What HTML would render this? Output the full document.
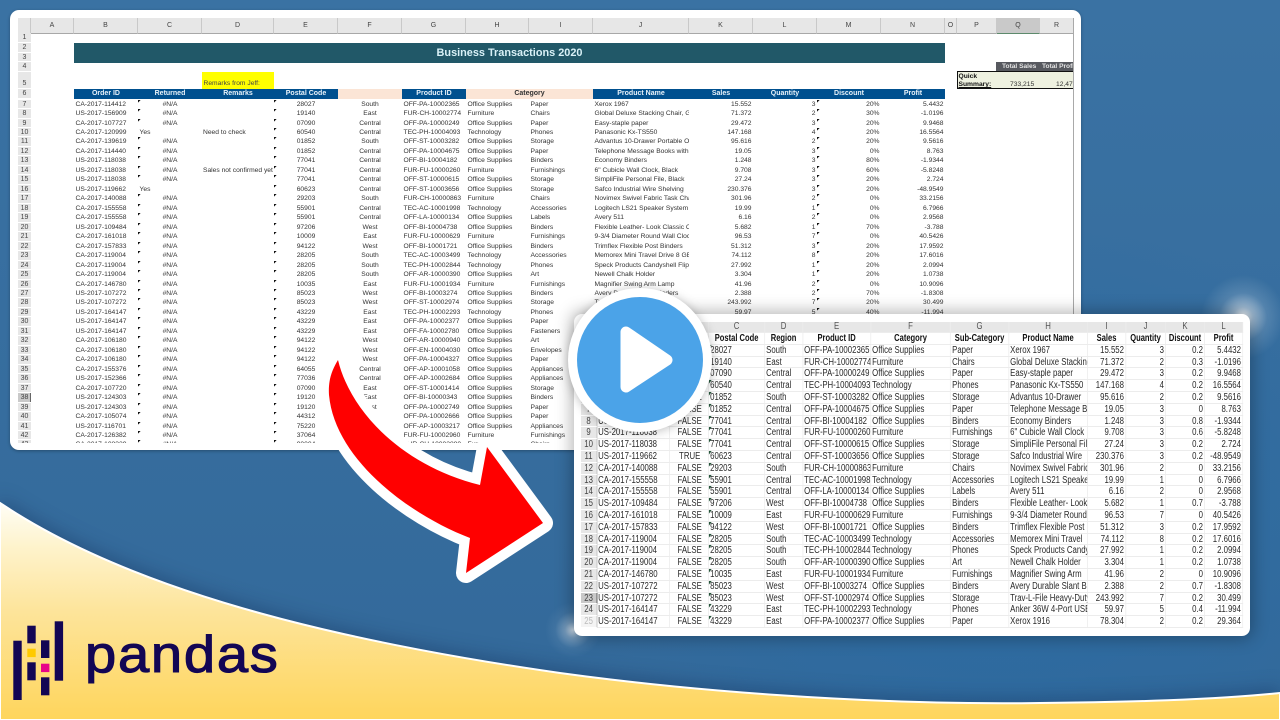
<!DOCTYPE html>
<html><head><meta charset="utf-8"><style>
*{box-sizing:border-box;margin:0;padding:0}
html,body{width:1280px;height:720px;overflow:hidden;background:#38709f;font-family:"Liberation Sans",sans-serif}
.abs{position:absolute}
#bg{position:absolute;inset:0;background:radial-gradient(ellipse 420px 300px at 1000px 520px,#2a6ba3 0%,rgba(42,107,163,0) 100%),linear-gradient(180deg,#3a72a3,#33699a)}
#lp{position:absolute;left:10px;top:10px;width:1071px;height:440px;background:#fff;border-radius:9px;overflow:hidden;box-shadow:0 1px 3px rgba(0,0,0,.3)}
#lw{position:absolute;left:-10px;top:-10px;width:1280px;height:720px;filter:blur(.3px);color:#333;font-size:6.7px}
#lw i{font-style:normal;white-space:nowrap;overflow:hidden;display:block;min-width:0}
.colh{position:absolute;top:18px;height:15.5px;background:#e7e7e7;border-bottom:1px solid #a8a8a8;border-right:1px solid #c9c9c9;text-align:center;line-height:15px;font-size:7px;color:#444}
.rn{position:absolute;left:18px;width:13px;background:#e7e7e7;text-align:center;font-size:7px;color:#444;border-bottom:1px solid #fff}
#lrows{position:absolute;left:18px;top:99.6px;width:927px;height:343.4px;overflow:hidden}
.r{display:grid;grid-template-columns:56px 64px 64px 72px 64px 64px 64px 63px 64px 96px 64px 64px 64px 64px;height:9.47px;line-height:9.47px}
.r i:nth-child(1){background:linear-gradient(90deg,#e7e7e7 13px,#fff 13px);padding-right:43px;text-align:center;font-size:7px;color:#444;box-shadow:inset 0 -1px 0 #fff}
.r i:nth-child(2){padding-left:1.5px}
.r i:nth-child(3){text-align:center;background:linear-gradient(135deg,#111 1.7px,transparent 2px) 0 0/4px 4px no-repeat}
.r i:nth-child(3).y{text-align:left;padding-left:1.5px;background:none}
.r i:nth-child(4){padding-left:1px}
.r i:nth-child(5){text-align:center;background:linear-gradient(135deg,#111 1.7px,transparent 2px) 0 0/4px 4px no-repeat}
.r i:nth-child(6){text-align:center}
.r i:nth-child(7),.r i:nth-child(8),.r i:nth-child(9),.r i:nth-child(10){padding-left:1.5px}
.r i:nth-child(n+11){text-align:right;padding-right:1.5px}
.r i:nth-child(13){background:linear-gradient(135deg,#111 1.7px,transparent 2px) 0 0/4px 4px no-repeat}
.h{position:absolute;top:88.7px;height:10.3px;line-height:10.3px;background:#00508f;color:#e8f3fb;font-weight:bold;font-size:7px;text-align:center}
#rp{position:absolute;left:574px;top:314px;width:676px;height:322px;background:#fff;border-radius:8px;box-shadow:0 0 16px 3px rgba(0,0,0,.28);overflow:hidden}
#rw{position:absolute;left:7px;top:8px;width:848.7px;height:306px;overflow:hidden;transform:scaleX(.78);transform-origin:0 0;font-size:10px;color:#2a2a2a;filter:blur(.25px)}
#rw i{font-style:normal;white-space:nowrap;overflow:hidden;display:block;min-width:0;border-right:1px solid #ececec;border-bottom:1px solid #ececec;padding-left:1.5px}
.q{display:grid;grid-template-columns:20.51px 93.59px 50px 71.79px 48.72px 87.18px 102.56px 74.36px 101.28px 48.72px 51.28px 50px 48.72px;height:11.8px;line-height:11.3px}
.q i:nth-child(1){background:#e7e7e7;text-align:center;padding-left:0!important;color:#444;border-bottom:1px solid #fff!important;border-right:1px solid #bbb!important}
.q i:nth-child(3){text-align:center}
.q i:nth-child(4){background:linear-gradient(135deg,#25553a 2.4px,transparent 2.7px) 0 0/5px 5px no-repeat;padding-left:1px}
.q i:nth-child(n+10){text-align:right;padding-right:1.5px;padding-left:0}
.q.t{height:11px;line-height:10.5px}
.q.t i{background:#e7e7e7!important;text-align:center!important;color:#555;border-right:1px solid #c4c4c4;border-bottom:1px solid #aaa;padding:0!important;font-size:10px}
.q.b{font-weight:bold;color:#111;font-size:9.7px}
.q.b i{text-align:center!important;padding:0!important;background:none!important;border-right:1px solid #555;border-bottom:1px solid #333}
</style></head><body>
<div id="bg"></div>
<div class="abs" style="left:1195px;top:270px;width:100px;height:100px;background:radial-gradient(circle at 48px 47px,rgba(255,255,255,.95) 0,rgba(255,255,255,.5) 10px,rgba(255,255,255,.14) 24px,rgba(255,255,255,0) 42px)"></div>
<div class="abs" style="left:545px;top:600px;width:60px;height:70px;background:radial-gradient(circle at 28px 30px,rgba(255,255,255,.7) 0,rgba(255,255,255,.3) 8px,rgba(255,255,255,.06) 18px,rgba(255,255,255,0) 28px)"></div>
<svg class="abs" style="left:0;top:0" width="1280" height="720">
<defs><linearGradient id="yg" x1="0" y1="503" x2="0" y2="720" gradientUnits="userSpaceOnUse"><stop offset="0" stop-color="#fffef6"/><stop offset=".2" stop-color="#fef3cc"/><stop offset=".5" stop-color="#fde49a"/><stop offset="1" stop-color="#fed55c"/></linearGradient></defs>
<path d="M0,503 C130,590 330,640 560,673 C720,695 900,705 1040,703 C1130,702 1210,700 1280,693 L1280,720 L0,720Z" fill="url(#yg)" stroke="#fff" stroke-width="2" style="filter:drop-shadow(0 -4px 9px rgba(10,30,70,.3))"/>
<rect x="13.3" y="640.7" width="8.4" height="59.3" fill="#130654"/>
<rect x="27.3" y="625.7" width="8.4" height="17.6" fill="#130654"/>
<rect x="27.3" y="648.7" width="8.4" height="8.4" fill="#ffca00"/>
<rect x="27.3" y="662.3" width="8.4" height="18" fill="#130654"/>
<rect x="41" y="640.3" width="8.4" height="17.7" fill="#130654"/>
<rect x="41" y="663.7" width="8.4" height="8.4" fill="#e70488"/>
<rect x="41" y="677.3" width="8.4" height="18" fill="#130654"/>
<rect x="54.7" y="621.3" width="8.4" height="59.4" fill="#130654"/>
<text transform="translate(85,672) scale(1.08,1)" font-family="Liberation Sans, sans-serif" font-size="52" letter-spacing="1.6" fill="#130654" stroke="#130654" stroke-width="1.1">pandas</text>
</svg>

<div id="lp"><div id="lw">
<div class="abs" style="left:18px;top:18px;width:1055px;height:15.5px;background:#e7e7e7"></div>
<div class="colh" style="left:18px;width:13px"></div>
<div class="colh" style="left:31px;width:43px">A</div>
<div class="colh" style="left:74px;width:64px">B</div>
<div class="colh" style="left:138px;width:64px">C</div>
<div class="colh" style="left:202px;width:72px">D</div>
<div class="colh" style="left:274px;width:64px">E</div>
<div class="colh" style="left:338px;width:64px">F</div>
<div class="colh" style="left:402px;width:64px">G</div>
<div class="colh" style="left:466px;width:63px">H</div>
<div class="colh" style="left:529px;width:64px">I</div>
<div class="colh" style="left:593px;width:96px">J</div>
<div class="colh" style="left:689px;width:64px">K</div>
<div class="colh" style="left:753px;width:64px">L</div>
<div class="colh" style="left:817px;width:64px">M</div>
<div class="colh" style="left:881px;width:64px">N</div>
<div class="colh" style="left:945px;width:12px">O</div>
<div class="colh" style="left:957px;width:40px">P</div>
<div class="colh" style="left:997px;width:43px;background:#c9c9c9;border-bottom:1.5px solid #5d8a6c">Q</div>
<div class="colh" style="left:1040px;width:33px;border-right:0">R</div>
<div class="abs" style="left:1073px;top:18px;width:1px;height:425px;background:#a9a9a9"></div>
<div class="rn" style="top:33px;height:10px;line-height:10px">1</div>
<div class="rn" style="top:43px;height:9.5px;line-height:9.5px">2</div>
<div class="rn" style="top:52.5px;height:9.5px;line-height:9.5px">3</div>
<div class="rn" style="top:62px;height:10px;line-height:10px">4</div>
<div class="rn" style="top:72px;height:16.7px;line-height:24px">5</div>
<div class="rn" style="top:88.7px;height:10.3px;line-height:10.3px">6</div>
<div class="abs" style="left:74px;top:43px;width:871px;height:19.5px;background:#215868;color:#d9f1f7;font-weight:bold;font-size:10.9px;line-height:21.5px;text-align:center">Business Transactions 2020</div>
<div class="abs" style="left:202px;top:72px;width:72px;height:16.7px;background:#ffff00;font-size:6.7px;line-height:23px;padding-left:1.5px;white-space:nowrap;overflow:hidden;color:#444">Remarks from Jeff:</div>
<div class="h" style="left:74px;width:64px">Order ID</div>
<div class="h" style="left:138px;width:64px">Returned</div>
<div class="h" style="left:202px;width:72px">Remarks</div>
<div class="h" style="left:274px;width:64px">Postal Code</div>
<div class="h" style="left:338px;width:64px;background:#fbe5d6"></div>
<div class="h" style="left:402px;width:64px">Product ID</div>
<div class="h" style="left:466px;width:127px;background:#fbe5d6;color:#333">Category</div>
<div class="h" style="left:593px;width:96px">Product Name</div>
<div class="h" style="left:689px;width:64px">Sales</div>
<div class="h" style="left:753px;width:64px">Quantity</div>
<div class="h" style="left:817px;width:64px">Discount</div>
<div class="h" style="left:881px;width:64px">Profit</div>
<div class="abs" style="left:996px;top:61.5px;width:77px;height:9.5px;background:#57595f;color:#e4e4e4;font-weight:bold;font-size:6.6px;line-height:9.5px;white-space:nowrap;overflow:hidden"><span class="abs" style="left:6px">Total Sales</span><span class="abs" style="left:46px">Total Profit</span></div>
<div class="abs" style="left:957px;top:71px;width:116px;height:18px;background:#eef1e0;border:1px solid #111;border-right:0;font-size:6.7px;color:#222"></div>
<div class="abs" style="left:958.5px;top:72px;font-size:6.7px;font-weight:bold;line-height:9px;color:#111">Quick</div>
<div class="abs" style="left:958.5px;top:81px;font-size:6.7px;font-weight:bold;line-height:8px;color:#111;text-decoration:underline">Summary:</div>
<div class="abs" style="left:1010px;top:80px;font-size:6.7px;line-height:9px;color:#333">733,215</div>
<div class="abs" style="left:1056px;top:80px;width:17px;overflow:hidden;font-size:6.7px;line-height:9px;color:#333">12,47</div>
<div id="lrows">
<div class="r"><i>7</i><i>CA-2017-114412</i><i>#N/A</i><i></i><i>28027</i><i>South</i><i>OFF-PA-10002365</i><i>Office Supplies</i><i>Paper</i><i>Xerox 1967</i><i>15.552</i><i>3</i><i>20%</i><i>5.4432</i></div>
<div class="r"><i>8</i><i>US-2017-156909</i><i>#N/A</i><i></i><i>19140</i><i>East</i><i>FUR-CH-10002774</i><i>Furniture</i><i>Chairs</i><i>Global Deluxe Stacking Chair, Gray</i><i>71.372</i><i>2</i><i>30%</i><i>-1.0196</i></div>
<div class="r"><i>9</i><i>CA-2017-107727</i><i>#N/A</i><i></i><i>07090</i><i>Central</i><i>OFF-PA-10000249</i><i>Office Supplies</i><i>Paper</i><i>Easy-staple paper</i><i>29.472</i><i>3</i><i>20%</i><i>9.9468</i></div>
<div class="r"><i>10</i><i>CA-2017-120999</i><i class="y">Yes</i><i>Need to check</i><i>60540</i><i>Central</i><i>TEC-PH-10004093</i><i>Technology</i><i>Phones</i><i>Panasonic Kx-TS550</i><i>147.168</i><i>4</i><i>20%</i><i>16.5564</i></div>
<div class="r"><i>11</i><i>CA-2017-139619</i><i>#N/A</i><i></i><i>01852</i><i>South</i><i>OFF-ST-10003282</i><i>Office Supplies</i><i>Storage</i><i>Advantus 10-Drawer Portable Organizer</i><i>95.616</i><i>2</i><i>20%</i><i>9.5616</i></div>
<div class="r"><i>12</i><i>CA-2017-114440</i><i>#N/A</i><i></i><i>01852</i><i>Central</i><i>OFF-PA-10004675</i><i>Office Supplies</i><i>Paper</i><i>Telephone Message Books with Fax</i><i>19.05</i><i>3</i><i>0%</i><i>8.763</i></div>
<div class="r"><i>13</i><i>US-2017-118038</i><i>#N/A</i><i></i><i>77041</i><i>Central</i><i>OFF-BI-10004182</i><i>Office Supplies</i><i>Binders</i><i>Economy Binders</i><i>1.248</i><i>3</i><i>80%</i><i>-1.9344</i></div>
<div class="r"><i>14</i><i>US-2017-118038</i><i>#N/A</i><i>Sales not confirmed yet</i><i>77041</i><i>Central</i><i>FUR-FU-10000260</i><i>Furniture</i><i>Furnishings</i><i>6" Cubicle Wall Clock, Black</i><i>9.708</i><i>3</i><i>60%</i><i>-5.8248</i></div>
<div class="r"><i>15</i><i>US-2017-118038</i><i>#N/A</i><i></i><i>77041</i><i>Central</i><i>OFF-ST-10000615</i><i>Office Supplies</i><i>Storage</i><i>SimpliFile Personal File, Black</i><i>27.24</i><i>3</i><i>20%</i><i>2.724</i></div>
<div class="r"><i>16</i><i>US-2017-119662</i><i class="y">Yes</i><i></i><i>60623</i><i>Central</i><i>OFF-ST-10003656</i><i>Office Supplies</i><i>Storage</i><i>Safco Industrial Wire Shelving</i><i>230.376</i><i>3</i><i>20%</i><i>-48.9549</i></div>
<div class="r"><i>17</i><i>CA-2017-140088</i><i>#N/A</i><i></i><i>29203</i><i>South</i><i>FUR-CH-10000863</i><i>Furniture</i><i>Chairs</i><i>Novimex Swivel Fabric Task Chair</i><i>301.96</i><i>2</i><i>0%</i><i>33.2156</i></div>
<div class="r"><i>18</i><i>CA-2017-155558</i><i>#N/A</i><i></i><i>55901</i><i>Central</i><i>TEC-AC-10001998</i><i>Technology</i><i>Accessories</i><i>Logitech LS21 Speaker System -</i><i>19.99</i><i>1</i><i>0%</i><i>6.7966</i></div>
<div class="r"><i>19</i><i>CA-2017-155558</i><i>#N/A</i><i></i><i>55901</i><i>Central</i><i>OFF-LA-10000134</i><i>Office Supplies</i><i>Labels</i><i>Avery 511</i><i>6.16</i><i>2</i><i>0%</i><i>2.9568</i></div>
<div class="r"><i>20</i><i>US-2017-109484</i><i>#N/A</i><i></i><i>97206</i><i>West</i><i>OFF-BI-10004738</i><i>Office Supplies</i><i>Binders</i><i>Flexible Leather- Look Classic C</i><i>5.682</i><i>1</i><i>70%</i><i>-3.788</i></div>
<div class="r"><i>21</i><i>CA-2017-161018</i><i>#N/A</i><i></i><i>10009</i><i>East</i><i>FUR-FU-10000629</i><i>Furniture</i><i>Furnishings</i><i>9-3/4 Diameter Round Wall Clock</i><i>96.53</i><i>7</i><i>0%</i><i>40.5426</i></div>
<div class="r"><i>22</i><i>CA-2017-157833</i><i>#N/A</i><i></i><i>94122</i><i>West</i><i>OFF-BI-10001721</i><i>Office Supplies</i><i>Binders</i><i>Trimflex Flexible Post Binders</i><i>51.312</i><i>3</i><i>20%</i><i>17.9592</i></div>
<div class="r"><i>23</i><i>CA-2017-119004</i><i>#N/A</i><i></i><i>28205</i><i>South</i><i>TEC-AC-10003499</i><i>Technology</i><i>Accessories</i><i>Memorex Mini Travel Drive 8 GB</i><i>74.112</i><i>8</i><i>20%</i><i>17.6016</i></div>
<div class="r"><i>24</i><i>CA-2017-119004</i><i>#N/A</i><i></i><i>28205</i><i>South</i><i>TEC-PH-10002844</i><i>Technology</i><i>Phones</i><i>Speck Products Candyshell Flip</i><i>27.992</i><i>1</i><i>20%</i><i>2.0994</i></div>
<div class="r"><i>25</i><i>CA-2017-119004</i><i>#N/A</i><i></i><i>28205</i><i>South</i><i>OFF-AR-10000390</i><i>Office Supplies</i><i>Art</i><i>Newell Chalk Holder</i><i>3.304</i><i>1</i><i>20%</i><i>1.0738</i></div>
<div class="r"><i>26</i><i>CA-2017-146780</i><i>#N/A</i><i></i><i>10035</i><i>East</i><i>FUR-FU-10001934</i><i>Furniture</i><i>Furnishings</i><i>Magnifier Swing Arm Lamp</i><i>41.96</i><i>2</i><i>0%</i><i>10.9096</i></div>
<div class="r"><i>27</i><i>US-2017-107272</i><i>#N/A</i><i></i><i>85023</i><i>West</i><i>OFF-BI-10003274</i><i>Office Supplies</i><i>Binders</i><i>Avery Durable Slant Binders</i><i>2.388</i><i>2</i><i>70%</i><i>-1.8308</i></div>
<div class="r"><i>28</i><i>US-2017-107272</i><i>#N/A</i><i></i><i>85023</i><i>West</i><i>OFF-ST-10002974</i><i>Office Supplies</i><i>Storage</i><i>Trav-L-File Heavy-Duty</i><i>243.992</i><i>7</i><i>20%</i><i>30.499</i></div>
<div class="r"><i>29</i><i>US-2017-164147</i><i>#N/A</i><i></i><i>43229</i><i>East</i><i>TEC-PH-10002293</i><i>Technology</i><i>Phones</i><i>Anker 36W 4-Port USB</i><i>59.97</i><i>5</i><i>40%</i><i>-11.994</i></div>
<div class="r"><i>30</i><i>US-2017-164147</i><i>#N/A</i><i></i><i>43229</i><i>East</i><i>OFF-PA-10002377</i><i>Office Supplies</i><i>Paper</i></div>
<div class="r"><i>31</i><i>US-2017-164147</i><i>#N/A</i><i></i><i>43229</i><i>East</i><i>OFF-FA-10002780</i><i>Office Supplies</i><i>Fasteners</i></div>
<div class="r"><i>32</i><i>CA-2017-106180</i><i>#N/A</i><i></i><i>94122</i><i>West</i><i>OFF-AR-10000940</i><i>Office Supplies</i><i>Art</i></div>
<div class="r"><i>33</i><i>CA-2017-106180</i><i>#N/A</i><i></i><i>94122</i><i>West</i><i>OFF-EN-10004030</i><i>Office Supplies</i><i>Envelopes</i></div>
<div class="r"><i>34</i><i>CA-2017-106180</i><i>#N/A</i><i></i><i>94122</i><i>West</i><i>OFF-PA-10004327</i><i>Office Supplies</i><i>Paper</i></div>
<div class="r"><i>35</i><i>CA-2017-155376</i><i>#N/A</i><i></i><i>64055</i><i>Central</i><i>OFF-AP-10001058</i><i>Office Supplies</i><i>Appliances</i></div>
<div class="r"><i>36</i><i>US-2017-152366</i><i>#N/A</i><i></i><i>77036</i><i>Central</i><i>OFF-AP-10002684</i><i>Office Supplies</i><i>Appliances</i></div>
<div class="r"><i>37</i><i>CA-2017-107720</i><i>#N/A</i><i></i><i>07090</i><i>East</i><i>OFF-ST-10001414</i><i>Office Supplies</i><i>Storage</i></div>
<div class="r"><i style="background:linear-gradient(90deg,#c9c9c9 12px,#666 12px,#666 13px,#fff 13px)">38</i><i>US-2017-124303</i><i>#N/A</i><i></i><i>19120</i><i>East</i><i>OFF-BI-10000343</i><i>Office Supplies</i><i>Binders</i></div>
<div class="r"><i>39</i><i>US-2017-124303</i><i>#N/A</i><i></i><i>19120</i><i>East</i><i>OFF-PA-10002749</i><i>Office Supplies</i><i>Paper</i></div>
<div class="r"><i>40</i><i>CA-2017-105074</i><i>#N/A</i><i></i><i>44312</i><i>East</i><i>OFF-PA-10002666</i><i>Office Supplies</i><i>Paper</i></div>
<div class="r"><i>41</i><i>US-2017-116701</i><i>#N/A</i><i></i><i>75220</i><i>West</i><i>OFF-AP-10003217</i><i>Office Supplies</i><i>Appliances</i></div>
<div class="r"><i>42</i><i>CA-2017-126382</i><i>#N/A</i><i></i><i>37064</i><i>South</i><i>FUR-FU-10002960</i><i>Furniture</i><i>Furnishings</i></div>
<div class="r"><i>43</i><i>CA-2017-108329</i><i>#N/A</i><i></i><i>90004</i><i>West</i><i>FUR-CH-10002880</i><i>Furniture</i><i>Chairs</i></div>
</div>
</div></div>

<div id="rp"><div id="rw">
<div class="q t"><i></i><i>A</i><i>B</i><i>C</i><i>D</i><i>E</i><i>F</i><i>G</i><i>H</i><i>I</i><i>J</i><i>K</i><i>L</i></div>
<div class="q b"><i>1</i><i>Order ID</i><i>Returned</i><i>Postal Code</i><i>Region</i><i>Product ID</i><i>Category</i><i>Sub-Category</i><i>Product Name</i><i>Sales</i><i>Quantity</i><i>Discount</i><i>Profit</i></div>
<div class="q"><i>2</i><i>CA-2017-114412</i><i>FALSE</i><i>28027</i><i>South</i><i>OFF-PA-10002365</i><i>Office Supplies</i><i>Paper</i><i>Xerox 1967</i><i>15.552</i><i>3</i><i>0.2</i><i>5.4432</i></div>
<div class="q"><i>3</i><i>US-2017-156909</i><i>FALSE</i><i>19140</i><i>East</i><i>FUR-CH-10002774</i><i>Furniture</i><i>Chairs</i><i>Global Deluxe Stacking</i><i>71.372</i><i>2</i><i>0.3</i><i>-1.0196</i></div>
<div class="q"><i>4</i><i>CA-2017-107727</i><i>FALSE</i><i>07090</i><i>Central</i><i>OFF-PA-10000249</i><i>Office Supplies</i><i>Paper</i><i>Easy-staple paper</i><i>29.472</i><i>3</i><i>0.2</i><i>9.9468</i></div>
<div class="q"><i>5</i><i>CA-2017-120999</i><i>TRUE</i><i>60540</i><i>Central</i><i>TEC-PH-10004093</i><i>Technology</i><i>Phones</i><i>Panasonic Kx-TS550</i><i>147.168</i><i>4</i><i>0.2</i><i>16.5564</i></div>
<div class="q"><i>6</i><i>CA-2017-139619</i><i>FALSE</i><i>01852</i><i>South</i><i>OFF-ST-10003282</i><i>Office Supplies</i><i>Storage</i><i>Advantus 10-Drawer</i><i>95.616</i><i>2</i><i>0.2</i><i>9.5616</i></div>
<div class="q"><i>7</i><i>CA-2017-114440</i><i>FALSE</i><i>01852</i><i>Central</i><i>OFF-PA-10004675</i><i>Office Supplies</i><i>Paper</i><i>Telephone Message Books</i><i>19.05</i><i>3</i><i>0</i><i>8.763</i></div>
<div class="q"><i>8</i><i>US-2017-118038</i><i>FALSE</i><i>77041</i><i>Central</i><i>OFF-BI-10004182</i><i>Office Supplies</i><i>Binders</i><i>Economy Binders</i><i>1.248</i><i>3</i><i>0.8</i><i>-1.9344</i></div>
<div class="q"><i>9</i><i>US-2017-118038</i><i>FALSE</i><i>77041</i><i>Central</i><i>FUR-FU-10000260</i><i>Furniture</i><i>Furnishings</i><i>6" Cubicle Wall Clock</i><i>9.708</i><i>3</i><i>0.6</i><i>-5.8248</i></div>
<div class="q"><i>10</i><i>US-2017-118038</i><i>FALSE</i><i>77041</i><i>Central</i><i>OFF-ST-10000615</i><i>Office Supplies</i><i>Storage</i><i>SimpliFile Personal File</i><i>27.24</i><i>3</i><i>0.2</i><i>2.724</i></div>
<div class="q"><i>11</i><i>US-2017-119662</i><i>TRUE</i><i>60623</i><i>Central</i><i>OFF-ST-10003656</i><i>Office Supplies</i><i>Storage</i><i>Safco Industrial Wire</i><i>230.376</i><i>3</i><i>0.2</i><i>-48.9549</i></div>
<div class="q"><i>12</i><i>CA-2017-140088</i><i>FALSE</i><i>29203</i><i>South</i><i>FUR-CH-10000863</i><i>Furniture</i><i>Chairs</i><i>Novimex Swivel Fabric</i><i>301.96</i><i>2</i><i>0</i><i>33.2156</i></div>
<div class="q"><i>13</i><i>CA-2017-155558</i><i>FALSE</i><i>55901</i><i>Central</i><i>TEC-AC-10001998</i><i>Technology</i><i>Accessories</i><i>Logitech LS21 Speaker</i><i>19.99</i><i>1</i><i>0</i><i>6.7966</i></div>
<div class="q"><i>14</i><i>CA-2017-155558</i><i>FALSE</i><i>55901</i><i>Central</i><i>OFF-LA-10000134</i><i>Office Supplies</i><i>Labels</i><i>Avery 511</i><i>6.16</i><i>2</i><i>0</i><i>2.9568</i></div>
<div class="q"><i>15</i><i>US-2017-109484</i><i>FALSE</i><i>97206</i><i>West</i><i>OFF-BI-10004738</i><i>Office Supplies</i><i>Binders</i><i>Flexible Leather- Look</i><i>5.682</i><i>1</i><i>0.7</i><i>-3.788</i></div>
<div class="q"><i>16</i><i>CA-2017-161018</i><i>FALSE</i><i>10009</i><i>East</i><i>FUR-FU-10000629</i><i>Furniture</i><i>Furnishings</i><i>9-3/4 Diameter Round</i><i>96.53</i><i>7</i><i>0</i><i>40.5426</i></div>
<div class="q"><i>17</i><i>CA-2017-157833</i><i>FALSE</i><i>94122</i><i>West</i><i>OFF-BI-10001721</i><i>Office Supplies</i><i>Binders</i><i>Trimflex Flexible Post</i><i>51.312</i><i>3</i><i>0.2</i><i>17.9592</i></div>
<div class="q"><i>18</i><i>CA-2017-119004</i><i>FALSE</i><i>28205</i><i>South</i><i>TEC-AC-10003499</i><i>Technology</i><i>Accessories</i><i>Memorex Mini Travel</i><i>74.112</i><i>8</i><i>0.2</i><i>17.6016</i></div>
<div class="q"><i>19</i><i>CA-2017-119004</i><i>FALSE</i><i>28205</i><i>South</i><i>TEC-PH-10002844</i><i>Technology</i><i>Phones</i><i>Speck Products Candy</i><i>27.992</i><i>1</i><i>0.2</i><i>2.0994</i></div>
<div class="q"><i>20</i><i>CA-2017-119004</i><i>FALSE</i><i>28205</i><i>South</i><i>OFF-AR-10000390</i><i>Office Supplies</i><i>Art</i><i>Newell Chalk Holder</i><i>3.304</i><i>1</i><i>0.2</i><i>1.0738</i></div>
<div class="q"><i>21</i><i>CA-2017-146780</i><i>FALSE</i><i>10035</i><i>East</i><i>FUR-FU-10001934</i><i>Furniture</i><i>Furnishings</i><i>Magnifier Swing Arm</i><i>41.96</i><i>2</i><i>0</i><i>10.9096</i></div>
<div class="q"><i>22</i><i>US-2017-107272</i><i>FALSE</i><i>85023</i><i>West</i><i>OFF-BI-10003274</i><i>Office Supplies</i><i>Binders</i><i>Avery Durable Slant B</i><i>2.388</i><i>2</i><i>0.7</i><i>-1.8308</i></div>
<div class="q"><i style="background:#c9c9c9;border-right:1px solid #444!important">23</i><i>US-2017-107272</i><i>FALSE</i><i>85023</i><i>West</i><i>OFF-ST-10002974</i><i>Office Supplies</i><i>Storage</i><i>Trav-L-File Heavy-Duty</i><i>243.992</i><i>7</i><i>0.2</i><i>30.499</i></div>
<div class="q"><i>24</i><i>US-2017-164147</i><i>FALSE</i><i>43229</i><i>East</i><i>TEC-PH-10002293</i><i>Technology</i><i>Phones</i><i>Anker 36W 4-Port USB</i><i>59.97</i><i>5</i><i>0.4</i><i>-11.994</i></div>
<div class="q"><i style="color:#bbb;background:#f4f4f4">25</i><i>US-2017-164147</i><i>FALSE</i><i>43229</i><i>East</i><i>OFF-PA-10002377</i><i>Office Supplies</i><i>Paper</i><i>Xerox 1916</i><i>78.304</i><i>2</i><i>0.2</i><i>29.364</i></div>
</div></div>

<svg class="abs" style="left:0;top:0" width="1280" height="720">
<path d="M338,360 C350,410 400,465 480,485 L487,447 L543,523 L466,573 L470,538 C410,515 335,460 329,395 C328,380 332,370 338,360Z" fill="#ff0000" stroke="#fff" stroke-width="20" stroke-linejoin="round" paint-order="stroke"/>
<circle cx="640" cy="360" r="72" fill="#fff" style="filter:drop-shadow(0 1px 5px rgba(0,0,0,.25))"/>
<circle cx="640" cy="360" r="63" fill="#4ba3e8"/>
<path d="M626,332 L667,360 L626,387Z" fill="#fff" stroke="#fff" stroke-width="11" stroke-linejoin="round"/>
</svg>
</body></html>
